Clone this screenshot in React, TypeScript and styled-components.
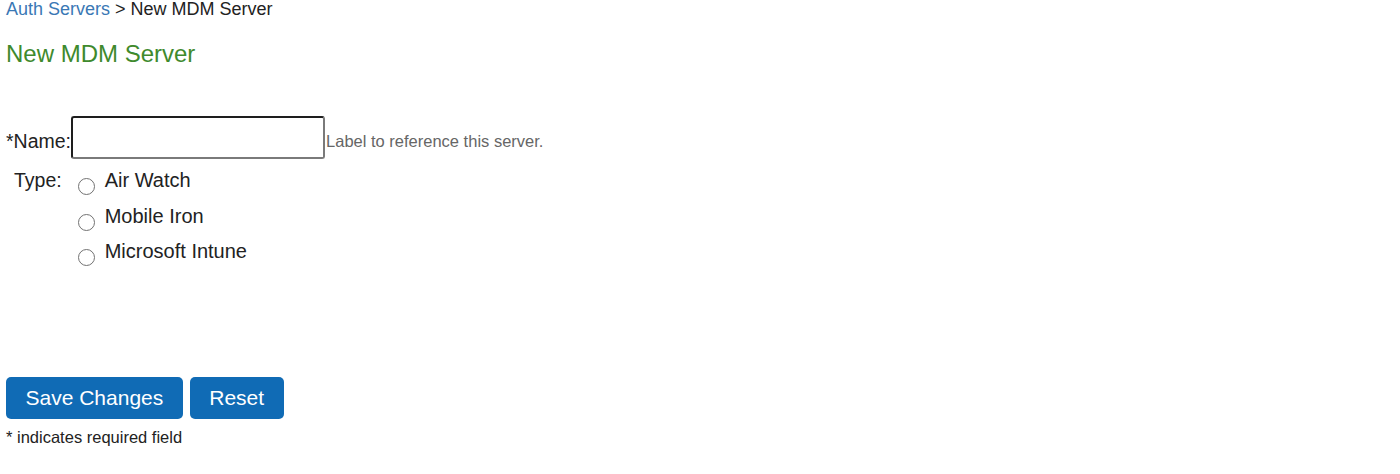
import React from "react";
import styled, { createGlobalStyle } from "styled-components";

const Global = createGlobalStyle`
  html, body { margin: 0; padding: 0; background: #fff; }
  body { font-family: "Liberation Sans", Arial, sans-serif; color: #222; }
`;

const Page = styled.div`
  padding: 0 6px;
`;

const Breadcrumb = styled.div`
  font-size: 18px;
  line-height: 18px;
  color: #222;
`;

const Crumb = styled.a`
  color: #3a78b5;
  text-decoration: none;
`;

const Title = styled.h2`
  margin: 22px 0 0;
  font-size: 24px;
  line-height: 28px;
  font-weight: normal;
  color: #3f8a2d;
`;

const Form = styled.form`
  margin-top: 48px;
`;

const FieldRow = styled.div`
  display: flex;
  align-items: center;
  height: 43px;
`;

const Label = styled.label<{ $indent?: number; $drop?: number }>`
  font-size: 19.5px;
  line-height: 22px;
  color: #222;
  padding-left: ${(p) => p.$indent ?? 0}px;
  padding-top: ${(p) => p.$drop ?? 0}px;
`;

const TextInput = styled.input`
  box-sizing: border-box;
  width: 254px;
  height: 43px;
  margin: 0;
  border: 2px solid;
  border-top-color: #1e1e1e;
  border-left-color: #1e1e1e;
  border-right-color: #7a7a7a;
  border-bottom-color: #7a7a7a;
  border-radius: 3px;
  font-size: 16px;
  padding: 0 6px;
  outline: none;
`;

const Hint = styled.span`
  font-size: 16.5px;
  line-height: 19px;
  color: #666;
  margin-left: 1px;
  padding-top: 7px;
`;

const TypeRow = styled.div`
  display: flex;
  align-items: flex-start;
  margin-top: 10px;
`;

const Options = styled.div`
  display: flex;
  flex-direction: column;
  gap: 13.5px;
  margin-left: 16px;
`;

const Option = styled.label`
  display: flex;
  align-items: flex-start;
  gap: 10px;
  font-size: 20px;
  line-height: 22px;
  color: #222;
`;

const Radio = styled.input`
  appearance: none;
  box-sizing: border-box;
  width: 17px;
  height: 17px;
  margin: 9px 0 -4px 0;
  border: 1.6px solid #727272;
  border-radius: 50%;
  background: #fff;
`;

const Buttons = styled.div`
  display: flex;
  gap: 7px;
  margin-top: 115px;
`;

const Button = styled.button`
  height: 42px;
  padding: 0 19.5px;
  border: none;
  border-radius: 5px;
  background: #106bb5;
  color: #fff;
  font-family: "Liberation Sans", Arial, sans-serif;
  font-size: 21px;
  cursor: pointer;
`;

const Note = styled.div`
  margin-top: 9px;
  font-size: 16.5px;
  line-height: 19px;
  color: #222;
`;

export default function App() {
  return (
    <>
      <Global />
      <Page>
        <Breadcrumb>
          <Crumb href="#">Auth Servers</Crumb> &gt; New MDM Server
        </Breadcrumb>
        <Title>New MDM Server</Title>
        <Form onSubmit={(e) => e.preventDefault()}>
          <FieldRow>
            <Label htmlFor="name" $drop={6}>*Name:</Label>
            <TextInput id="name" type="text" />
            <Hint>Label to reference this server.</Hint>
          </FieldRow>
          <TypeRow>
            <Label $indent={8}>Type:</Label>
            <Options>
              <Option>
                <Radio type="radio" name="type" value="airwatch" />
                Air Watch
              </Option>
              <Option>
                <Radio type="radio" name="type" value="mobileiron" />
                Mobile Iron
              </Option>
              <Option>
                <Radio type="radio" name="type" value="intune" />
                Microsoft Intune
              </Option>
            </Options>
          </TypeRow>
          <Buttons>
            <Button type="submit">Save Changes</Button>
            <Button type="reset">Reset</Button>
          </Buttons>
          <Note>* indicates required field</Note>
        </Form>
      </Page>
    </>
  );
}
